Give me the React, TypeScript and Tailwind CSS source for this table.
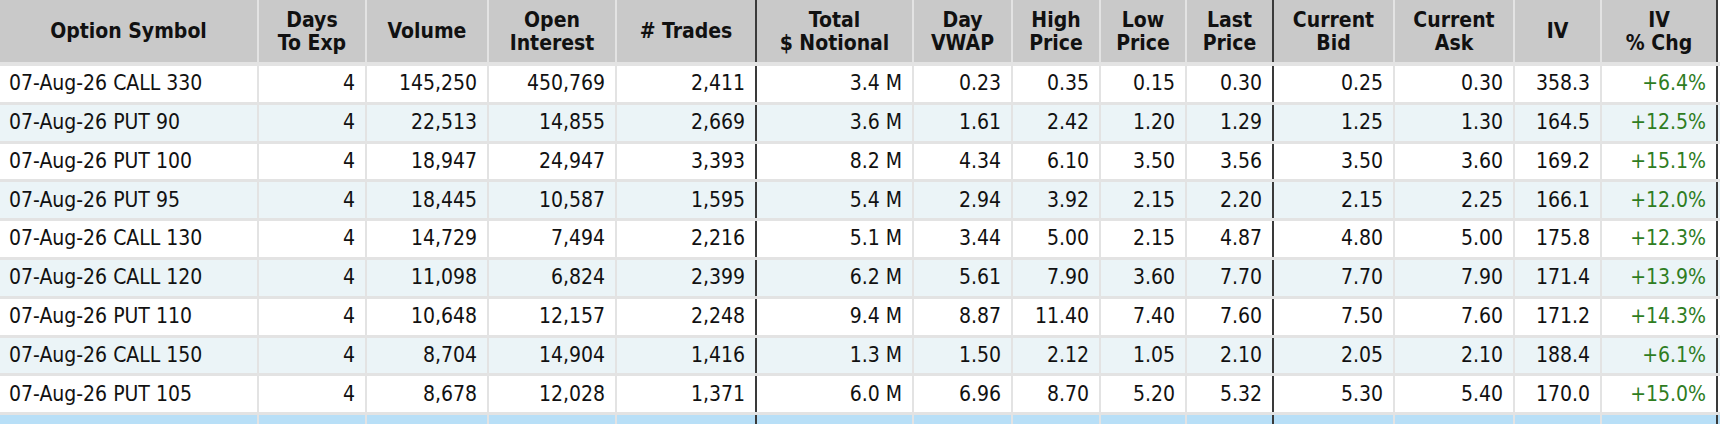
import React from "react";

const cols = [
  { h: ["Option Symbol"], w: "w-[259px]", thick: false },
  { h: ["Days", "To Exp"], w: "w-[108px]", thick: false },
  { h: ["Volume"], w: "w-[122px]", thick: false },
  { h: ["Open", "Interest"], w: "w-[128px]", thick: false },
  { h: ["# Trades"], w: "w-[140px]", thick: true },
  { h: ["Total", "$ Notional"], w: "w-[157px]", thick: false },
  { h: ["Day", "VWAP"], w: "w-[99px]", thick: false },
  { h: ["High", "Price"], w: "w-[88px]", thick: false },
  { h: ["Low", "Price"], w: "w-[86px]", thick: false },
  { h: ["Last", "Price"], w: "w-[87px]", thick: true },
  { h: ["Current", "Bid"], w: "w-[121px]", thick: false },
  { h: ["Current", "Ask"], w: "w-[120px]", thick: false },
  { h: ["IV"], w: "w-[87px]", thick: false },
  { h: ["IV", "% Chg"], w: "w-[116px]", thick: true },
];

const rows: string[][] = [
  ["07-Aug-26 CALL 330", "4", "145,250", "450,769", "2,411", "3.4 M", "0.23", "0.35", "0.15", "0.30", "0.25", "0.30", "358.3", "+6.4%"],
  ["07-Aug-26 PUT 90", "4", "22,513", "14,855", "2,669", "3.6 M", "1.61", "2.42", "1.20", "1.29", "1.25", "1.30", "164.5", "+12.5%"],
  ["07-Aug-26 PUT 100", "4", "18,947", "24,947", "3,393", "8.2 M", "4.34", "6.10", "3.50", "3.56", "3.50", "3.60", "169.2", "+15.1%"],
  ["07-Aug-26 PUT 95", "4", "18,445", "10,587", "1,595", "5.4 M", "2.94", "3.92", "2.15", "2.20", "2.15", "2.25", "166.1", "+12.0%"],
  ["07-Aug-26 CALL 130", "4", "14,729", "7,494", "2,216", "5.1 M", "3.44", "5.00", "2.15", "4.87", "4.80", "5.00", "175.8", "+12.3%"],
  ["07-Aug-26 CALL 120", "4", "11,098", "6,824", "2,399", "6.2 M", "5.61", "7.90", "3.60", "7.70", "7.70", "7.90", "171.4", "+13.9%"],
  ["07-Aug-26 PUT 110", "4", "10,648", "12,157", "2,248", "9.4 M", "8.87", "11.40", "7.40", "7.60", "7.50", "7.60", "171.2", "+14.3%"],
  ["07-Aug-26 CALL 150", "4", "8,704", "14,904", "1,416", "1.3 M", "1.50", "2.12", "1.05", "2.10", "2.05", "2.10", "188.4", "+6.1%"],
  ["07-Aug-26 PUT 105", "4", "8,678", "12,028", "1,371", "6.0 M", "6.96", "8.70", "5.20", "5.32", "5.30", "5.40", "170.0", "+15.0%"],
];

function borderCls(thick: boolean) {
  return thick ? "border-r-2 border-r-[#3a3a3a]" : "border-r-2 border-r-[#e3e3e3]";
}

export default function App() {
  return (
    <div className="w-[1720px] h-[424px] overflow-hidden bg-white font-['DejaVu_Sans_Condensed','DejaVu_Sans',sans-serif] text-[#111]">
      {/* header */}
      <div className="flex border-b-4 border-b-[#e3e3e3]">
        {cols.map((c, i) => (
          <div
            key={i}
            className={`${c.w} ${borderCls(c.thick)} shrink-0 h-[62px] bg-[#c9c9c9] flex flex-col items-center justify-center text-center font-bold text-[21px] leading-[23px] pt-[1px]`}
          >
            {c.h.map((l, j) => (
              <span key={j} className="whitespace-nowrap">{l}</span>
            ))}
          </div>
        ))}
      </div>
      {rows.map((r, ri) => (
        <div
          key={ri}
          className={`flex border-b-[3px] border-b-[#e3e3e3] ${ri % 2 === 0 ? "bg-white" : "bg-[#ebf4f7]"}`}
        >
          {r.map((v, ci) => (
            <div
              key={ci}
              className={`${cols[ci].w} ${borderCls(cols[ci].thick)} shrink-0 h-[35.8px] flex items-center text-[21px] whitespace-nowrap ${
                ci === 0 ? "justify-start pl-[9px]" : "justify-end pr-[10px]"
              } ${ci === 13 ? "text-[#2f7d1f]" : ""}`}
            >
              {v}
            </div>
          ))}
        </div>
      ))}
      <div className="flex bg-[#b8dff7]">
        {cols.map((c, i) => (
          <div key={i} className={`${c.w} ${borderCls(c.thick)} shrink-0 h-[20px]`} />
        ))}
      </div>
    </div>
  );
}
